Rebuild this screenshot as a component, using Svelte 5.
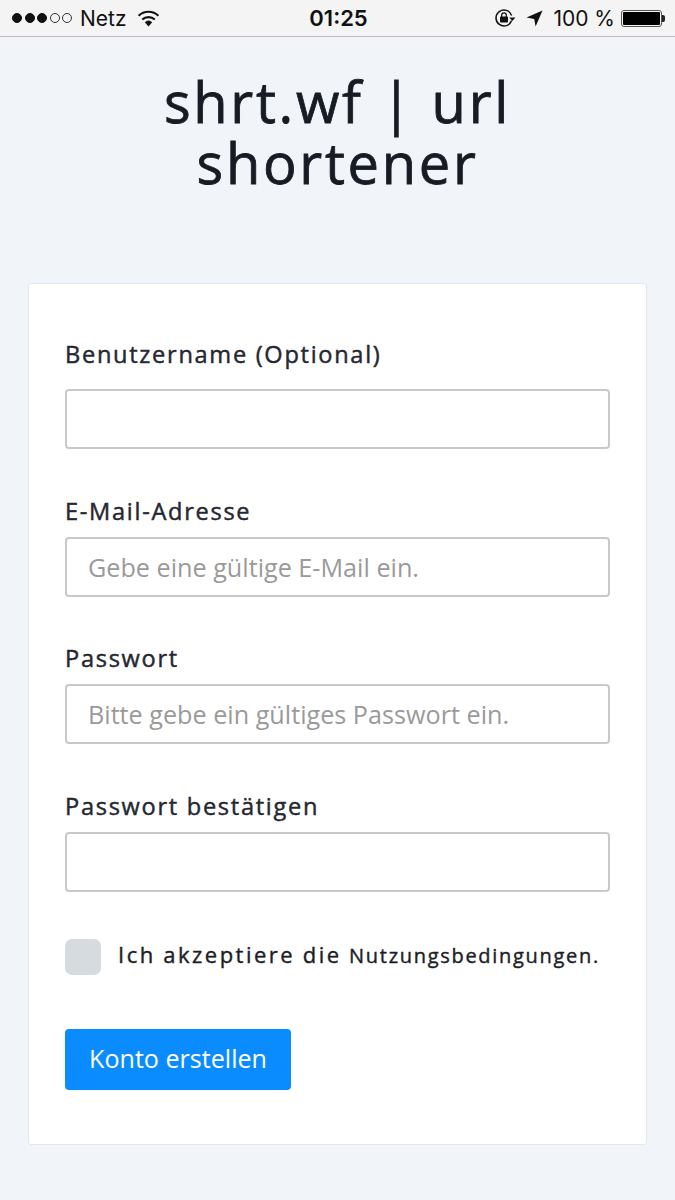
<script>
  const fields = [
    { label: 'Benutzername (Optional)', placeholder: '', type: 'text' },
    { label: 'E-Mail-Adresse', placeholder: 'Gebe eine gültige E-Mail ein.', type: 'email' },
    { label: 'Passwort', placeholder: 'Bitte gebe ein gültiges Passwort ein.', type: 'password' },
    { label: 'Passwort bestätigen', placeholder: '', type: 'password' }
  ];
</script>

<div class="page">
  <header class="status">
    <div class="left">
      <span class="dots">
        <i class="on"></i><i class="on"></i><i class="on"></i><i></i><i></i>
      </span>
      <span class="netz">Netz</span>
      <svg class="wifi" width="23" height="17" viewBox="0 0 23 17">
        <path d="M11.5 16.5 L7.8 12.2 A5.6 5.6 0 0 1 15.2 12.2 Z" fill="#111"/>
        <path d="M5.2 9.6 A9.2 9.2 0 0 1 17.8 9.6" fill="none" stroke="#111" stroke-width="2.1"/>
        <path d="M1.6 5.8 A14.2 14.2 0 0 1 21.4 5.8" fill="none" stroke="#111" stroke-width="2.1"/>
      </svg>
    </div>
    <div class="time">01:25</div>
    <div class="right">
      <svg class="lock" width="22" height="20" viewBox="0 0 22 20">
        <path d="M17.6 12.5 A8 8 0 1 1 17.6 7.5" fill="none" stroke="#111" stroke-width="1.5"/>
        <path d="M15.4 9.6 L21.4 9.6 L18.4 13 Z" fill="#111"/>
        <rect x="6" y="8.6" width="8" height="6" rx="0.8" fill="#111"/>
        <path d="M7.7 9 V7.2 A2.3 2.3 0 0 1 12.3 7.2 V9" fill="none" stroke="#111" stroke-width="1.3"/>
      </svg>
      <svg class="arrow" width="17" height="17" viewBox="0 0 17 17">
        <path d="M16.5 0.5 L0.5 7.6 L8.2 8.9 L9.6 16.5 Z" fill="#111"/>
      </svg>
      <span class="pct">100 %</span>
      <span class="battery"><span class="fill"></span></span>
    </div>
  </header>

  <h1>shrt.wf | url shortener</h1>

  <main class="card">
    <form>
      {#each fields as f}
        <label class="field">
          <span class="lbl">{f.label}</span>
          <input type={f.type} placeholder={f.placeholder} />
        </label>
      {/each}
      <label class="terms">
        <span class="box"></span>
        <span class="terms-text">Ich akzeptiere die <a href="#terms">Nutzungsbedingungen.</a></span>
      </label>
      <button type="button">Konto erstellen</button>
    </form>
  </main>
</div>

<style>
  :global(body) {
    margin: 0;
    background: #f1f4f9;
    font-family: "Open Sans", sans-serif;
  }
  .page {
    width: 675px;
    height: 1200px;
    overflow: hidden;
    background: #f1f4f9;
  }
  .status {
    height: 36px;
    background: #f4f4f4;
    border-bottom: 1px solid #bdbdbd;
    display: grid;
    grid-template-columns: 1fr auto 1fr;
    align-items: center;
    padding: 0 10px 0 12px;
    color: #111;
    font-family: Inter, sans-serif;
  }
  .left, .right {
    display: flex;
    align-items: center;
  }
  .right { justify-content: flex-end; }
  .dots { display: flex; gap: 2.5px; }
  .dots i {
    width: 10px;
    height: 10px;
    border-radius: 50%;
    border: 1px solid #333;
    box-sizing: border-box;
  }
  .dots i.on { background: #111; border-color: #111; }
  .netz { font-size: 21px; margin-left: 8px; }
  .wifi { margin-left: 10px; }
  .time { font-size: 22px; font-weight: 600; }
  .lock { margin-right: 10px; }
  .arrow { margin-right: 10px; }
  .pct { font-size: 21px; margin-right: 6px; }
  .battery {
    position: relative;
    width: 41px;
    height: 17px;
    box-sizing: border-box;
    border: 1px solid #555;
    border-radius: 3px;
    padding: 1px;
    margin-right: 3px;
    display: flex;
  }
  .battery::after {
    content: "";
    position: absolute;
    right: -4px;
    top: 4px;
    width: 3px;
    height: 7px;
    background: #222;
    border-radius: 0 2px 2px 0;
  }
  .fill { flex: 1; background: #000; border-radius: 1px; }

  h1 {
    margin: 34px auto 0;
    width: 400px;
    text-align: center;
    font-size: 56px;
    font-weight: 400;
    line-height: 61px;
    letter-spacing: 2.7px;
    color: #161b24;
    -webkit-text-stroke: 0.8px #161b24;
  }
  .card {
    margin: 90px 28px 0;
    height: 862px;
    box-sizing: border-box;
    background: #fff;
    border: 1px solid #e4e7eb;
    border-radius: 3px;
    padding: 52px 36px 0;
  }
  form { display: flex; flex-direction: column; }
  .field {
    display: flex;
    flex-direction: column;
    margin-bottom: 43.5px;
  }
  .lbl {
    font-size: 23.6px;
    line-height: 36px;
    font-weight: 400;
    letter-spacing: 1.7px;
    color: #252831;
    -webkit-text-stroke: 0.45px #252831;
    margin-bottom: 8px;
  }
  .field:first-child .lbl { margin-bottom: 17px; }
  input {
    height: 60px;
    box-sizing: border-box;
    width: 545px;
    border: 2px solid #c9c9c9;
    border-radius: 4px;
    background: #fff;
    padding: 0 21px;
    font: 400 25.2px "Open Sans", sans-serif;
    outline: none;
  }
  input::placeholder { color: #9a9a9a; opacity: 1; }
  .terms {
    display: flex;
    align-items: center;
    gap: 17px;
    margin-top: 3.5px;
  }
  .box {
    width: 36px;
    height: 36px;
    border-radius: 7px;
    background: #d5dbdf;
    flex: none;
  }
  .terms-text {
    font-size: 22px;
    font-weight: 400;
    letter-spacing: 2.5px;
    word-spacing: -0.7px;
    color: #1b1e26;
    -webkit-text-stroke: 0.4px #1b1e26;
    position: relative;
    top: -3px;
  }
  .terms-text a {
    font-size: 20px;
    letter-spacing: 1.7px;
    color: inherit;
    text-decoration: none;
  }
  button {
    margin-top: 54px;
    width: 226px;
    height: 61px;
    background: #0a8cff;
    color: #fff;
    border: 0;
    border-radius: 4px;
    font: 400 25.1px "Open Sans", sans-serif;
    padding: 0 0 2px;
  }
</style>
